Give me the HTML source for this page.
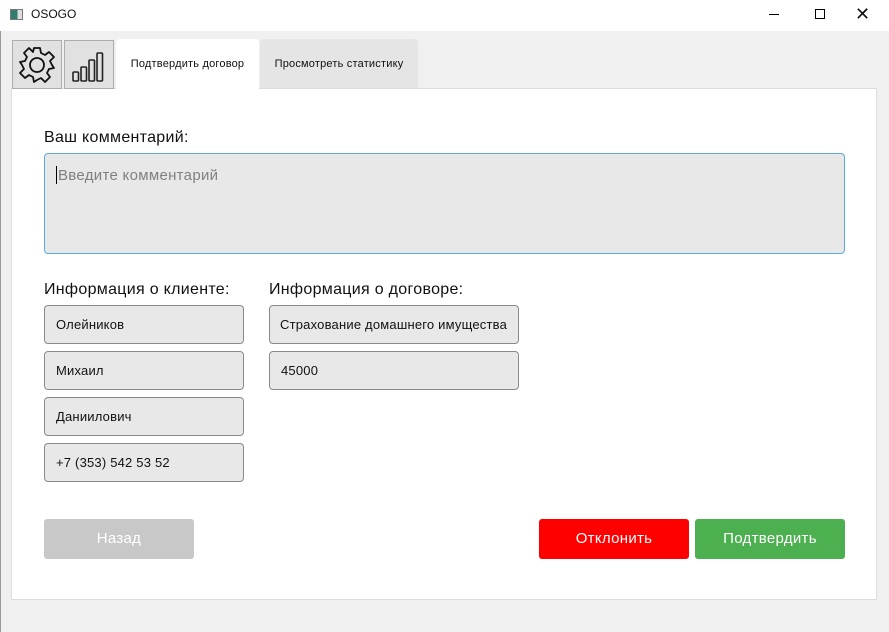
<!DOCTYPE html><html><head><meta charset="utf-8"><style>
*{box-sizing:border-box;margin:0;padding:0}
body{width:889px;height:632px;background:#f0f0f0;font-family:"Liberation Sans","DejaVu Sans",sans-serif;position:relative;overflow:hidden;color:#111}
.a{position:absolute}
.title{left:0;top:0;width:889px;height:31px;background:#fff}
.f{background:#e8e8e8;border:1px solid #8a8a8a;border-radius:4px;font-size:13px;padding-left:11px;line-height:37px;height:39px;letter-spacing:0.2px}
.lbl{font-size:16px;color:#111;letter-spacing:0.3px}
.btn{height:40px;width:150px;border-radius:3px;color:#fff;font-size:15px;text-align:center;line-height:40px;letter-spacing:0.3px}
</style></head><body>
<div class="a title"></div>
<div class="a" style="left:10px;top:9px;width:13px;height:11px;border:1px solid #777;background:linear-gradient(90deg,#2e7d6e 60%,#ddd 60%)"></div>
<div class="a" style="left:31px;top:7px;font-size:12px">OSOGO</div>
<div class="a" style="left:769px;top:14px;width:10px;height:1px;background:#000"></div>
<div class="a" style="left:815px;top:9px;width:10px;height:10px;border:1px solid #000"></div>
<div class="a" style="left:855px;top:4px;font-size:18px;line-height:20px">✕</div>
<div class="a" style="left:0;top:31px;width:1px;height:601px;background:#999"></div>
<div class="a" style="left:11px;top:88px;width:866px;height:512px;background:#fff;border:1px solid #dcdcdc"></div>
<div class="a" style="left:12px;top:40px;width:50px;height:49px;background:#e1e1e1;border:1px solid #adadad">
<svg width="48" height="47" viewBox="0 0 48 47"><g transform="translate(24,24)" fill="none" stroke="#111" stroke-width="1.8"><path d="M-3,-17 L3,-17 L4,-12 L8,-10 L12,-13 L17,-8 L13,-4 L15,0 L17,3 L12,4 L10,8 L13,12 L8,17 L4,13 L0,15 L-3,17 L-4,12 L-8,10 L-12,13 L-17,8 L-13,4 L-15,0 L-17,-3 L-12,-4 L-10,-8 L-13,-12 L-8,-17 L-4,-13 Z" stroke-linejoin="round"/><circle r="7"/></g></svg></div>
<div class="a" style="left:64px;top:40px;width:50px;height:49px;background:#e1e1e1;border:1px solid #adadad">
<svg width="48" height="47"><g fill="none" stroke="#222" stroke-width="1.6"><rect x="8" y="31" width="5.5" height="9" rx="1"/><rect x="16" y="26" width="5.5" height="14" rx="1"/><rect x="24" y="19" width="5.5" height="21" rx="1"/><rect x="32" y="12" width="5.5" height="28" rx="1"/></g></svg></div>
<div class="a" style="left:116px;top:39px;width:143px;height:50px;background:#fff;border-radius:4px 4px 0 0;font-size:11px;line-height:50px;text-align:center;letter-spacing:0.2px">Подтвердить договор</div>
<div class="a" style="left:260px;top:39px;width:158px;height:49px;background:#e5e5e5;border-radius:4px 4px 0 0;font-size:11px;line-height:50px;text-align:center;letter-spacing:0.2px">Просмотреть статистику</div>
<div class="a lbl" style="left:44px;top:129px">Ваш комментарий:</div>
<div class="a" style="left:44px;top:153px;width:801px;height:101px;background:#e8e8e8;border:1px solid #5aa9e0;border-radius:4px"></div>
<div class="a" style="left:56px;top:166px;width:1px;height:18px;background:#000"></div>
<div class="a" style="left:58px;top:167px;font-size:15px;color:#808080;letter-spacing:0.3px">Введите комментарий</div>
<div class="a lbl" style="left:44px;top:281px">Информация о клиенте:</div>
<div class="a lbl" style="left:269px;top:281px">Информация о договоре:</div>
<div class="a f" style="left:44px;top:305px;width:200px">Олейников</div>
<div class="a f" style="left:44px;top:351px;width:200px">Михаил</div>
<div class="a f" style="left:44px;top:397px;width:200px">Даниилович</div>
<div class="a f" style="left:44px;top:443px;width:200px">+7 (353) 542 53 52</div>
<div class="a f" style="left:269px;top:305px;width:250px;white-space:nowrap;overflow:hidden;padding-left:10px">Страхование домашнего имущества</div>
<div class="a f" style="left:269px;top:351px;width:250px">45000</div>
<div class="a btn" style="left:44px;top:519px;background:#c8c8c8">Назад</div>
<div class="a btn" style="left:539px;top:519px;background:#ff0000">Отклонить</div>
<div class="a btn" style="left:695px;top:519px;background:#4caf50">Подтвердить</div>
</body></html>
